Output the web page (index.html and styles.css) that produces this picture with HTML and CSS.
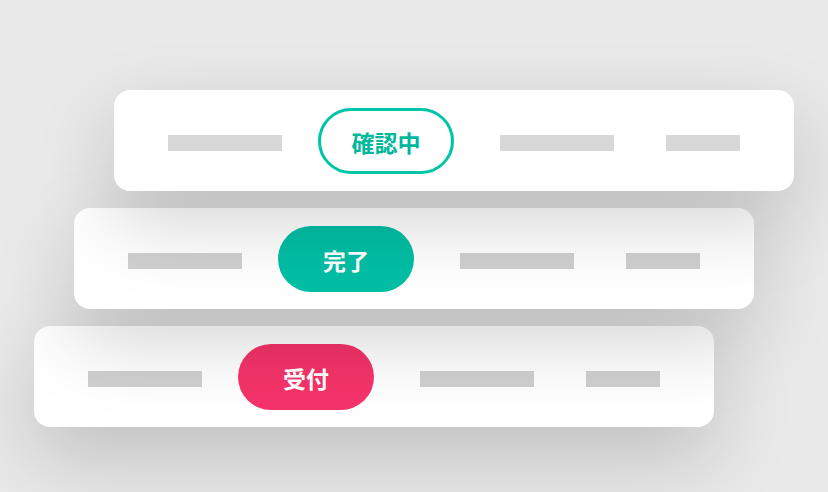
FILE: index.html
```html
<!DOCTYPE html>
<html lang="ja">
<head>
<meta charset="utf-8">
<link rel="stylesheet" href="styles.css">
</head>
<body>
<div class="stack">
  <div class="card card-1">
    <span class="bar bar-long"></span>
    <span class="pill pill-outline">確認中</span>
    <span class="bar bar-long"></span>
    <span class="bar bar-short"></span>
  </div>
  <div class="card card-2">
    <span class="bar bar-long"></span>
    <span class="pill pill-teal">完了</span>
    <span class="bar bar-long"></span>
    <span class="bar bar-short"></span>
  </div>
  <div class="card card-3">
    <span class="bar bar-long"></span>
    <span class="pill pill-pink">受付</span>
    <span class="bar bar-long"></span>
    <span class="bar bar-short"></span>
  </div>
</div>
</body>
</html>
```
FILE: styles.css
```css
html, body {
  margin: 0;
  padding: 0;
}
body {
  width: 828px;
  height: 492px;
  overflow: hidden;
  background: #e9e9e9;
  font-family: "Noto Sans CJK JP", "Noto Sans", sans-serif;
}
.stack {
  display: flex;
  flex-direction: column;
  gap: 17px;
  padding-top: 90px;
}
.card {
  position: relative;
  width: 680px;
  height: 101px;
  box-sizing: border-box;
  border-radius: 16px;
  background: #fff;
  display: flex;
  align-items: center;
  padding: 0 54px;
  box-shadow: 0 30px 80px rgba(0, 0, 0, 0.18);
}
.card-1 { margin-left: 114px; z-index: 3; }
.card-2 { margin-left: 74px; z-index: 2; }
.card-3 { margin-left: 34px; z-index: 1; }
.bar {
  display: block;
  height: 16px;
  margin-top: 5px;
  background: #d8d8d8;
}
.card-2 .bar, .card-3 .bar { background: #d0d0d0; }
.bar-long { width: 114px; }
.bar-short { width: 74px; margin-left: 52px; }
.pill {
  width: 136px;
  height: 66px;
  box-sizing: border-box;
  border-radius: 33px;
  display: flex;
  align-items: center;
  justify-content: center;
  padding-top: 2px;
  font-size: 23px;
  font-weight: 700;
  color: #fff;
  margin: 0 46px 0 36px;
}
.pill-outline {
  border: 3px solid #00c4a7;
  color: #00b89c;
  background: #fff;
}
.pill-teal { background: #00bfa5; }
.pill-pink { background: #f5336a; }
```
